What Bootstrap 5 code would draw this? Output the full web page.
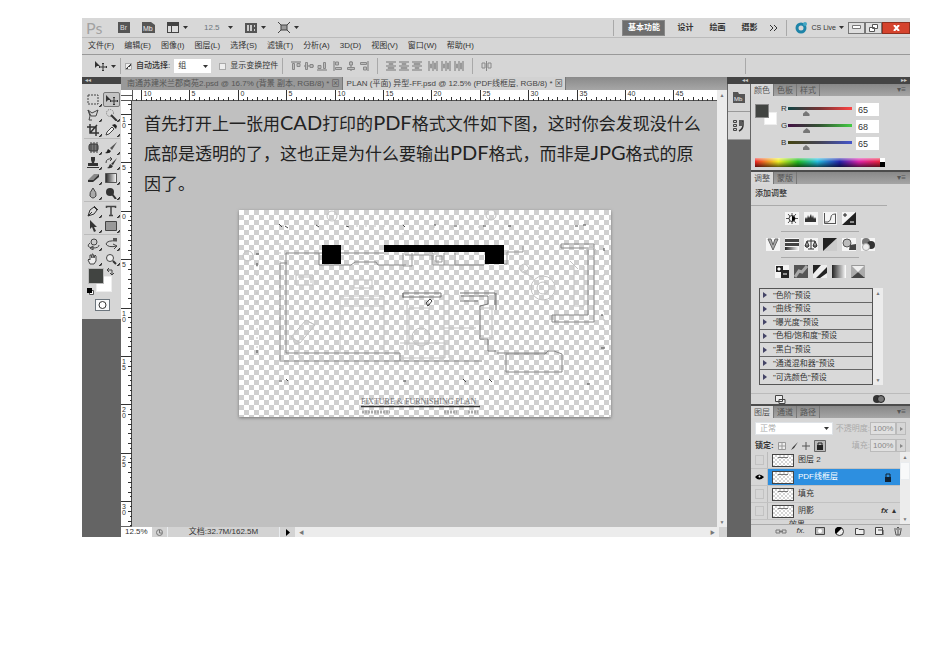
<!DOCTYPE html>
<html lang="zh-CN">
<head>
<meta charset="utf-8">
<meta name="viewport" content="width=device-width, initial-scale=1">
<title>PLAN - Ps</title>
<link href="https://cdn.jsdelivr.net/npm/bootstrap@5.3.0/dist/css/bootstrap.min.css" rel="stylesheet">
<style>
body{background:#fff;font-family:"Liberation Sans","Noto Sans CJK SC",sans-serif;font-size:8px;line-height:12px;color:#333;padding:18px 40px 24px 82px}
svg{display:block;flex:none}
button,select,input{font:inherit;color:inherit;border:0;padding:0;background:none;border-radius:0}
label,h2{font-size:inherit;margin:0;line-height:inherit}
a{color:inherit;text-decoration:none}
.app{background:#646464;min-width:780px}
.face{background:#d6d6d6}
.topbar{height:20px;border-bottom:1px solid #bbb;background:#d8d8d8}
.menus{height:17px;gap:10px;padding-left:6px;border-bottom:1px solid #999}
.opts{height:22px;background:#d6d6d6}
.vsep{width:1px;height:16px;background:#a9a9a9;flex:none}
.opt-end{margin-right:164px}
.logo-ps{font:16px/18px Lato,sans-serif;color:#a2a2a2;width:32px}
.g3{gap:3px}.g4{gap:4px}.g8{gap:8px}.g10{gap:10px}.g12{gap:12px}.g16{gap:16px}
.live{font-size:7px}
.workspace-on{background:#6e6e6e;color:#fff;border:1px solid #888;height:16px;width:43px;font-weight:700}
.winbtn{width:17px;height:12px;border:1px solid #777;background:#dedede;display:flex;align-items:center;justify-content:center}
.winbtn.closer{width:28px;background:#d5432d;color:#fff;border-color:#8f3020}
.check{appearance:none;width:7px;height:7px;border:1px solid #aaa;background:#eee;margin:0;flex:none}
.check:checked{background:linear-gradient(135deg,transparent 45%,#444 45%,#444 60%,transparent 60%),#eee}
.drop{appearance:none;background:#fff url("data:image/svg+xml,%3Csvg xmlns='http://www.w3.org/2000/svg' width='5' height='3'%3E%3Cpath d='M0 0h5L2.5 3z' fill='%23333'/%3E%3C/svg%3E") no-repeat right 3px center;padding:0 10px 0 4px}
.pick{width:37px;height:14px}
.blend{width:78px;height:13px}
.strip{height:7px;background:#454545;color:#ccc;font-size:6px;line-height:7px;padding:0 3px}
.toolcol{width:39px;flex:none}
.tools{padding:8px 1px 8px 2px}
.toolgrid{display:grid;grid-template-columns:1fr 1fr;border-bottom:1px solid #bbb;padding-bottom:1px;margin-bottom:1px;justify-items:center}
.toolgrid button{width:17px;height:15px;display:flex;align-items:center;justify-content:center;border-radius:2px;background:linear-gradient(135deg,transparent 90%,#333 90%)}
.toolgrid .on{border:1px solid #777;background:#c4c4c4}
.swatches,.chips{position:relative}
.swatches{height:27px}
.fgc,.bgc{position:absolute;width:16px;height:16px;border:1px solid #bbb}
.fgc{left:4px;top:0;background:#414441;z-index:1}
.bgc{left:12px;top:8px;background:#fff;border-color:#eee}
.sw-swap{position:absolute;right:6px;top:0}.sw-def{position:absolute;left:3px;bottom:0}
.doctabs{height:13px;background:linear-gradient(#8a8a8a,#a6a6a6)}
.doctab{height:13px;padding:0 2px 0 6px;color:#555;background:#999;border-right:1px solid #777;white-space:nowrap}
.doctab.on{background:#d2d2d2;color:#444;padding-left:4px}
.ruler{background:#fff}
.canvas{background:#c0c0c0;color:#222}
.note{font:17px/30px "Noto Sans CJK SC",sans-serif;padding:7px 8px 0 12px;margin:0 0 12px;white-space:nowrap}
.note span{font-family:Lato,"Noto Sans CJK SC",sans-serif;font-size:20px;line-height:20px}
.sheet{width:372px;max-width:95%;box-shadow:0 1px 3px #777;background:repeating-conic-gradient(#d0d0d0 0 25%,#fff 0 50%) 0 0/10px 10px}
.sheet svg{width:100%;height:auto}
.vscroll{width:10px;flex:none;background:#ececec;color:#777;font-size:5px;line-height:10px;text-align:center}
.knob{height:18px}
.status{height:10px;line-height:10px;background:#d3d3d3}
.zoomval{width:31px;padding-left:4px}
.docsize{width:113px}
.dock{width:24px;flex:none}
.dockset{margin:0 1px}
.dockbtn{height:28px;border-bottom:1px solid #999;display:flex;align-items:center;justify-content:center}
.panels{width:159px;flex:none}
.ptabs{height:12px;background:linear-gradient(#888,#a5a5a5);color:#555}
.ptabs button{height:12px;width:23px;border-right:1px solid #777;line-height:11px}
.ptabs .on{background:#d8d8d8;color:#555}
.pgap{height:2px;background:#4c4c4c}
.colorbody{height:74px;padding:7px 4px 0}
.chips{width:26px;height:22px}
.chips .fgc{width:14px;height:14px;left:0;top:1px;border-color:#888}.chips .bgc{left:9px;top:9px;width:13px;height:13px}
.chan{height:17px}
.chan label{width:7px}
.chan input[type=range]{appearance:none;width:64px;height:13px;margin:0 4px 0 0;background:linear-gradient(90deg,var(--a),var(--m),var(--z)) 0 4px/100% 3px no-repeat}
.chan input[type=range]::-webkit-slider-thumb{appearance:none;width:7px;height:5px;margin-top:8px;background:#777;clip-path:polygon(50% 0,100% 60%,100% 100%,0 100%,0 60%)}
.c-r{--a:#144;--m:#733;--z:#f44}.c-g{--a:#414;--m:#353;--z:#4c4}.c-b{--a:#441;--m:#445;--z:#45c}
.num{width:23px;height:13px;background:#fff;padding-left:2px;font-size:9px}
.spectrum{width:130px;height:9px;background:linear-gradient(#fff8,#fff0 40%,#0009),linear-gradient(90deg,#e22,#ee2 18%,#2b2 33%,#2bd 48%,#22a 65%,#d2a 80%,#e22)}
.adjbody{height:220px}
.adjtitle{height:21px}
.adjline{border-top:1px solid #aaa;width:136px}
.adjarea{width:138px}
.adjrow{height:26px;width:78px;margin:0 auto;border-bottom:1px solid #aaa;gap:5px}
.adjrow.last{border:0}
.presets{border:1px solid #555;height:97px;width:114px;display:grid;grid-auto-rows:1fr}
.presets button{border-bottom:1px solid #666;text-align:left;padding-left:3px;line-height:11px;display:flex;align-items:center;gap:6px;color:#333;min-height:0;background:#d9d9d9}
.presets button:last-child{border:0}
.presets i{width:0;height:0;border:3px solid transparent;border-left:4px solid #446;border-right:0}
.adjfoot{border-top:1px solid #bbb}
.prow{height:17px}
.box{border:1px solid #bbb;height:13px;width:26px;color:#888;background:#e0e0e0;padding-left:2px}
.boxbtn{border:1px solid #bbb;height:13px;width:10px;display:flex;align-items:center;justify-content:center}
.layer{height:17px;border-bottom:1px solid #c2c2c2;line-height:16px}
.layer .eye{width:17px;height:16px;border-right:1px solid #bbb;display:flex;align-items:center;justify-content:center}
.layer .eye i{width:9px;height:10px;border:1px solid #c2c2c2}
.thumb{width:22px;height:13px;border:1px solid #444;background:linear-gradient(#777,#777) 5px 2px/10px 1px no-repeat,repeating-conic-gradient(#d5d5d5 0 25%,#fff 0 50%) 0 0/4px 4px}
.layer.on .nm{background:#2d8fe0;color:#fff}
.nm{height:16px}
.layer-cut{height:4px;overflow:hidden;line-height:10px;padding-left:38px}
.layerfoot{height:13px;border-top:1px solid #aaa}
.faded{color:#aaa}
</style>
</head>
<body>
<svg width="0" height="0" class="position-absolute" aria-hidden="true">
<defs>
<symbol id="mv" viewBox="0 0 13 10"><path d="M1 0v7l2-2h3z" fill="#333"/><path d="M9 2v8M5 6h8M8 3l1-1 1 1M8 9l1 1 1-1M6 5 5 6l1 1M12 5l1 1-1 1" fill="none" stroke="#333"/></symbol>
<symbol id="ca" viewBox="0 0 5 3"><path d="M0 0h5L2.500 3z" fill="#333"/></symbol>
<symbol id="alt" viewBox="0 0 10 10"><path d="M0 1h10" stroke="#777"/><path d="M1.500 2.500h2v6h-2zM6 2.500h3v3H6z" fill="#bbb" stroke="#888"/></symbol>
<symbol id="alm" viewBox="0 0 10 10"><path d="M0 5h10" stroke="#777"/><path d="M1.500 1.500h2v7h-2zM6 3.500h3v3H6z" fill="#bbb" stroke="#888"/></symbol>
<symbol id="dis" viewBox="0 0 10 10"><path d="M0 1h10M0 5h10M0 9h10" stroke="#777"/><path d="M3 2.500h4v1H3zM2 6.500h6v1H2z" fill="#bbb" stroke="#999"/></symbol>
</defs></svg>

<main class="app">
<header>
 <div class="topbar d-flex align-items-center">
  <div class="d-flex align-items-center flex-grow-1 ps-1">
   <span class="logo-ps">Ps</span>
   <div class="d-flex align-items-center g12">
   <svg width="12" height="11"><rect width="12" height="11" fill="#555"/><text x="2" y="8" font-size="7" fill="#ddd">Br</text></svg>
   <svg width="13" height="11"><path d="M0 0h9l4 3v8H0z" fill="#555"/><text x="1" y="9" font-size="7" fill="#eee">Mb</text></svg>
   <span class="d-flex align-items-center g4"><svg width="12" height="11"><path d="M0 0h12v11H0z" fill="#444"/><path d="M1 4h3v6H1zM5 4h6v6H5z" fill="#ddd"/></svg><svg width="5" height="3"><use href="#ca"/></svg></span>
   <span class="d-flex align-items-center g8 ms-1 text-secondary">12.5 <svg width="5" height="3"><use href="#ca"/></svg></span>
   <span class="d-flex align-items-center g4"><svg width="12" height="10"><path d="M0 0h12v10H0z" fill="#555"/><path d="M2 2h2v6H2zM5 2h2v6H5zM9 2h1v2H9zM9 6h1v2H9z" fill="#ccc"/></svg><svg width="5" height="3"><use href="#ca"/></svg></span>
   <span class="d-flex align-items-center g4"><svg width="12" height="11"><path d="M3 3h6v5H3zM0 0l3 3M12 0 9 3M0 11l3-3M12 11 9 8" fill="#999" stroke="#444"/></svg><svg width="5" height="3"><use href="#ca"/></svg></span>
   </div>
  </div>
  <nav class="d-flex align-items-center g12">
   <div class="d-flex g8"><span class="vsep"></span><button class="workspace-on">基本功能</button></div>
   <div class="d-flex align-items-center g16"><button class="fw-bold">设计</button><button class="fw-bold">绘画</button><button class="fw-bold">摄影</button></div>
   <button aria-label="更多"><svg width="9" height="8"><path d="m1 1 3 3-3 3M5 1l3 3-3 3" fill="none" stroke="#333"/></svg></button>
  </nav>
  <div class="d-flex align-items-center g4 ps-1"><span class="vsep mx-1"></span>
   <svg width="12" height="12"><circle cx="6" cy="6" r="4" fill="none" stroke="#1e84a8" stroke-width="3"/><circle cx="10" cy="2" r="2" fill="#45a7c4"/></svg>
   <button class="live d-flex align-items-center g3">CS Live <svg width="5" height="3"><use href="#ca"/></svg></button>
   <div class="d-flex">
    <button class="winbtn" aria-label="最小化"><svg width="9" height="5"><path d="M.5.5h8v3h-8z" fill="#fff" stroke="#777"/></svg></button>
    <button class="winbtn" aria-label="还原"><svg width="9" height="8"><path d="M3.500.5h5v4h-5zM.5 3.500h5v4h-5z" fill="#fff" stroke="#555"/></svg></button>
    <button class="winbtn closer" aria-label="关闭"><svg width="7" height="6"><path d="m1 0 5 6M6 0 1 6" stroke="#fff" stroke-width="2"/></svg></button>
   </div></div>
 </div>
 <nav class="menus face d-flex align-items-center text-nowrap"><a href="#">文件(F)</a><a href="#">编辑(E)</a><a href="#">图像(I)</a><a href="#">图层(L)</a><a href="#">选择(S)</a><a href="#">滤镜(T)</a><a href="#">分析(A)</a><a href="#">3D(D)</a><a href="#">视图(V)</a><a href="#">窗口(W)</a><a href="#">帮助(H)</a></nav>
 <div class="opts d-flex align-items-center text-nowrap">
  <div class="d-flex align-items-center g4 px-1 ms-2"><svg width="13" height="10"><use href="#mv"/></svg><svg width="5" height="3"><use href="#ca"/></svg></div>
  <span class="vsep"></span>
  <div class="d-flex align-items-center px-1"><input class="check me-1" type="checkbox" id="auto" checked><label for="auto" class="fw-medium">自动选择:</label></div>
  <select class="drop pick" aria-label="自动选择"><option>组</option></select>
  <div class="d-flex align-items-center px-1"><input class="check mx-1" type="checkbox" id="tf"><label for="tf">显示变换控件</label></div>
  <span class="vsep"></span>
  <div class="d-flex g3 px-2" id="alignA"></div><span class="vsep"></span>
  <div class="d-flex g3 px-2" id="alignB"></div><span class="vsep"></span>
  <svg class="ms-2" width="11" height="10"><path d="M1 2v5h3V2zM7 2v5h3V2zM5.500 0v10" fill="none" stroke="#888"/></svg>
  <span class="vsep ms-auto opt-end"></span>
 </div>
</header>

<div class="d-flex">
 <aside class="toolcol">
  <div class="strip">◂◂</div>
  <div class="tools face">
   <div class="toolgrid">
    <button aria-label="选框"><svg width="12" height="11"><path d="M1 1h10v9H1z" fill="none" stroke="#444" stroke-dasharray="2 1"/></svg></button>
    <button class="on" aria-label="移动"><svg width="13" height="10"><use href="#mv"/></svg></button>
    <button aria-label="套索"><svg width="12" height="12"><path d="M1 1l4 3 6-3-2 6H4L1 1l2 6-1 4h3" fill="none" stroke="#444"/></svg></button>
    <button aria-label="快速选择"><svg width="13" height="12"><circle cx="5" cy="4" r="3.500" fill="none" stroke="#777" stroke-dasharray="1 1"/><path d="m6 6 6 6" stroke="#333" stroke-width="2"/></svg></button>
    <button aria-label="裁剪"><svg width="12" height="12"><path d="M3 0v9h9M0 3h9v9M3 9l7-8" fill="none" stroke="#333" stroke-width="1.500"/></svg></button>
    <button aria-label="吸管"><svg width="12" height="12"><path d="m1 11 1-3 5-5 2 2-5 5z" fill="#eee" stroke="#444"/><path d="m7 1 4 4 1-3-2-2z" fill="#222"/></svg></button>
   </div>
   <div class="toolgrid">
    <button aria-label="修复"><svg width="13" height="11"><rect x="2" y="2" width="9" height="7" rx="2" fill="#777" stroke="#333"/><path d="M4 0v11M7 0v11M10 0v11" stroke="#444"/></svg></button>
    <button aria-label="画笔"><svg width="12" height="12"><path d="M12 0 5 6l2 2z" fill="#555"/><path d="M0 11q2-1 3-4l3 2q-1 3-6 2" fill="#222"/></svg></button>
    <button aria-label="图章"><svg width="12" height="12"><path d="M4 0h4v3L7 6h4v3H1V6h4L4 3zM0 10h12v1H0z" fill="#333"/></svg></button>
    <button aria-label="历史画笔"><svg width="13" height="12"><path d="M12 1 6 7l2 1zM2 11q2-1 3-4l3 2q-1 3-6 2" fill="#333"/><path d="M1 6q0-5 6-4M5 0l2 2-2 2" fill="none" stroke="#444"/></svg></button>
    <button aria-label="橡皮擦"><svg width="12" height="11"><path d="m1 8 6-6h5l-6 6z" fill="#888"/><path d="M1 8h5v2H1zM6 8l6-6v3l-6 5z" fill="#333"/></svg></button>
    <button aria-label="渐变"><svg width="12" height="10"><defs><linearGradient id="gr"><stop stop-color="#222"/><stop offset="1" stop-color="#fff"/></linearGradient></defs><path d="M.5.5h11v9H.5z" fill="url(#gr)" stroke="#555"/></svg></button>
    <button aria-label="模糊"><svg width="10" height="12"><path d="M5 1q4 5 3 8-3 4-6 0-1-3 3-8" fill="#aaa" stroke="#444"/></svg></button>
    <button aria-label="减淡"><svg width="12" height="12"><circle cx="5" cy="5" r="4" fill="#333"/><path d="m7 7 4 5" stroke="#333" stroke-width="2"/></svg></button>
   </div>
   <div class="toolgrid">
    <button aria-label="钢笔"><svg width="12" height="12"><path d="m1 11 2-6 4-3 3 3-3 4zM1 11l4-4M7 1l4 4" fill="#ddd" stroke="#333"/></svg></button>
    <button aria-label="文字"><svg width="12" height="12"><path d="M1.500 3V1.500h9V3M6 1.500v9M4 10.500h4" fill="none" stroke="#444" stroke-width="1.500"/></svg></button>
    <button aria-label="路径选择"><svg width="9" height="12"><path d="M1 0v9l2-2 2 5 2-1-2-4h3z" fill="#333"/></svg></button>
    <button aria-label="矩形"><svg width="12" height="10"><path d="M.5.5h11v9H.5z" fill="#999" stroke="#444"/></svg></button>
   </div>
   <div class="toolgrid border-0">
    <button aria-label="3D 旋转"><svg width="13" height="12"><circle cx="7" cy="4" r="3" fill="#ccc" stroke="#444"/><path d="M3 5q-5 4 3 5 6 0 6-3M6 8v4l-3-2z" fill="none" stroke="#444"/></svg></button>
    <button aria-label="3D 环绕"><svg width="13" height="12"><path d="M12 3Q2 2 1 6q2 4 11 2M8 6l4 2-3 3" fill="none" stroke="#444"/><path d="M8 0h4v3H8z" fill="#555"/></svg></button>
    <button aria-label="抓手"><svg width="12" height="12"><path d="M3 11 1 7l1-1 1 1V2h1l1 3V1h1l1 4 1-3 1 1v5l-2 3z" fill="#eee" stroke="#444"/></svg></button>
    <button aria-label="缩放"><svg width="12" height="12"><circle cx="5" cy="5" r="3.500" fill="#eee" stroke="#444"/><path d="m8 8 3 3" stroke="#333" stroke-width="2"/></svg></button>
   </div>
   <div class="swatches"><div class="fgc"></div><div class="bgc"></div>
    <svg class="sw-swap" width="7" height="7"><path d="M1 2h4v4M2 0 0 2l2 2M3 5l2 2 2-2" fill="none" stroke="#444"/></svg>
    <svg class="sw-def" width="7" height="7"><path d="M2.500 2.500h4v4h-4z" fill="#fff" stroke="#555"/><path d="M0 0h5v5H0z" fill="#000"/></svg></div>
   <div class="pt-1"><button class="d-flex align-items-center justify-content-center mx-auto border border-secondary bg-light" aria-label="快速蒙版"><svg width="13" height="10"><circle cx="6.500" cy="5" r="3.500" fill="#fff" stroke="#333"/></svg></button></div>
  </div>
 </aside>

 <section class="flex-grow-1 d-flex flex-column overflow-hidden">
  <div class="doctabs d-flex"><button class="doctab">南通苏建米兰郡商苑2.psd @ 16.7% (背景 副本, RGB/8) * ⊠</button><button class="doctab on">PLAN (平面) 异型-FF.psd @ 12.5% (PDF线框层, RGB/8) * ⊠</button></div>
  <div class="d-flex flex-grow-1">
   <div class="flex-grow-1 d-flex flex-column overflow-hidden">
    <svg id="rh" class="ruler w-100" height="11"></svg>
    <div class="d-flex flex-grow-1">
     <svg id="rv" class="ruler" width="11" height="425"></svg>
     <div class="canvas flex-grow-1">
      <p class="note">首先打开上一张用<span>CAD</span>打印的<span>PDF</span>格式文件如下图，这时你会发现没什么<br>底部是透明的了，这也正是为什么要输出<span>PDF</span>格式，而非是<span>JPG</span>格式的原<br>因了。</p>
      <div class="sheet mx-auto">
       <svg viewBox="0 0 372 207" fill="none" stroke="#888">
        <g fill="#000" stroke="none"><path d="M83 35h19v19H83zM145 35h120v19h-19V42H145z"/></g>
        <path d="M47 53V43h36M80 43v12h32l4-3h21l2 3h28M102 43h43M41 53v98M47 53v90M41 53h7M41 151h202M47 143h114v8" stroke="#888"/>
        <path d="M164 43v13h9V43M166 45h27v10M190 43h4v12h11V43M197 46h6v6h-6zM205 55h40M216 43v12h29M265 54h3V42h16v-6" stroke="#999"/>
        <path d="M164 83h38v4h-38zM164 83v5M221 83h35v12M222 86h27v8l-8 2v33h8v12h8M239 91h-18M257 83v17" stroke="#777"/>
        <path d="M322 34v4h27v67h-36v7h42V34h-33M316 105v7M267 144v18h56v-18l-8-3h-6l-3 3zM258 143h50" stroke="#888"/>
        <g stroke="#c4c4c4"><path d="M57 65h17v10H57zM59 67h13v6M101 86h44v10h-44zM101 96v47M145 96v47M105 89h36M115 78h18v-8h-18zM170 98h20v36h-20zM205 84v64M210 84v64M168 90v50M205 118h32M241 98h12v30h-12M335 56v40M345 56v40h-10M331 51l8 8M280 58q5-8 10 0-5 10-10 0M282 60l12 8M161 133h45v15h-45M60 130v18"/><circle cx="182" cy="127" r="9"/><circle cx="304" cy="78" r="12"/><circle cx="304" cy="78" r="6"/><circle cx="93" cy="6" r="5"/><circle cx="252" cy="5" r="5"/><circle cx="9" cy="46" r="5"/><circle cx="352" cy="42" r="5"/><path d="m52 127 15-17 9 5-15 18zM55 128q-2 7 5 5M70 112l6 3"/><path d="M41 15v155M78 22v-8M108 16h54M164 14v18M194 17h54M264 17v13M300 17v12M18 55v90M365 55v90" stroke-dasharray="2 7"/></g>
        <path d="m40 14 3 3M46 16l3 2M77 15l3 2M107 16l3 1M164 15l2 2M195 15h2M215 16h3M244 16h3M269 16h3M336 16h3M344 15h3M17 44h3M18 53v3M18 140v3M40 171h3M47 169l2 2M164 171h3M224 169l3 3M250 169l3 3M187 93l4-4 2 2-4 5zM188 96l3-2M365 38v3M362 105h2M362 138h4M348 174h3" stroke="#444"/>
        <text x="122" y="194" font-size="8" font-family="Liberation Serif" fill="#777" stroke="none">FIXTURE &amp; FURNISHING PLAN</text>
        <path d="M122 196.500h119" stroke="#333" stroke-width="1.500"/><path d="M123 202h28M205 202h13M229 202h10" stroke="#aaa" stroke-width="3" stroke-dasharray="2 1"/>
       </svg>
      </div>
     </div>
    </div>
   </div>
   <div class="vscroll d-flex flex-column justify-content-between"><span>▲</span><span>▼</span></div>
  </div>
  <div class="status d-flex align-items-center text-nowrap">
   <span class="bg-white zoomval">12.5%</span>
   <svg class="mx-1" width="7" height="7"><circle cx="3.500" cy="3.500" r="3" fill="none" stroke="#777"/><path d="M3.500 1v3H6" fill="none" stroke="#777"/></svg>
   <span class="border-start border-end border-secondary-subtle text-center docsize">文档:32.7M/162.5M</span>
   <svg class="mx-1" width="7" height="7"><path d="M2 0v7l4-3.500z" fill="#000"/></svg>
   <div class="flex-grow-1 d-flex justify-content-between px-1 vscroll w-auto align-items-center"><span>◀</span><span>▶</span></div><span class="px-1"></span>
  </div>
 </section>

 <aside class="dock"><div class="strip text-end">◂◂</div>
  <div class="face dockset"><button class="dockbtn w-100" aria-label="Mini Bridge"><svg width="12" height="11"><path d="M0 0h5l1 2h6v9H0z" fill="#555"/><text x="1" y="9" font-size="6" fill="#eee">Mb</text></svg></button>
  <button class="dockbtn w-100" aria-label="历史记录"><svg width="12" height="12"><path d="M.5.5h3v2h-3zM.5 4.500h3v2h-3zM.5 8.500h3v2h-3z" fill="#ccc" stroke="#444"/><path d="M6 1h4v4q0 4-4 6M6 3h3M6 5h3" fill="none" stroke="#333" stroke-width="1.500"/></svg></button></div>
 </aside>

 <aside class="panels">
  <div class="strip text-end">▸▸</div>
  <div class="ptabs d-flex"><button class="on">颜色</button><button>色板</button><button>样式</button><span class="ms-auto pe-1">▾≡</span></div>
  <div class="colorbody face">
   <div class="d-flex">
    <div class="chips"><div class="fgc"></div><div class="bgc"></div></div>
    <div>
     <div class="chan d-flex"><label for="r">R</label><input id="r" class="c-r" type="range" max="255" value="65"><input class="num" value="65" aria-label="R 值"></div>
     <div class="chan d-flex"><label for="g">G</label><input id="g" class="c-g" type="range" max="255" value="68"><input class="num" value="68" aria-label="G 值"></div>
     <div class="chan d-flex"><label for="b">B</label><input id="b" class="c-b" type="range" max="255" value="65"><input class="num" value="65" aria-label="B 值"></div>
    </div>
   </div>
   <div class="spectrum mt-1 d-flex justify-content-end"><svg width="5" height="9"><path d="M0 0h5v4H0z" fill="#fff"/><path d="M0 4h5v5H0z"/></svg></div>
  </div>
  <div class="pgap"></div>
  <div class="ptabs d-flex"><button class="on">调整</button><button>蒙版</button><span class="ms-auto pe-1">▾≡</span></div>
  <div class="adjbody face">
   <h2 class="adjtitle px-1 pt-1">添加调整</h2>
   <div class="adjline"></div>
   <div class="adjarea">
   <div class="adjrow d-flex align-items-center justify-content-center">
    <svg width="14" height="13"><path fill="#f5f5f5" d="M0 0h14v13H0z"/><path d="M7 1v11M1 6.500h12M3 2l8 9M11 2l-8 9" stroke="#555"/><circle cx="7" cy="6.500" r="3" fill="#eee" stroke="#333"/><path d="M7 4v5q3 0 3-2.500T7 4"/></svg>
    <svg width="14" height="13"><path fill="#f5f5f5" d="M0 0h14v13H0z"/><path d="M1 10V7l1-2 1 2 1-4 1 3 2-4 1 4 1-3 1 4 1-2 1 2v3z" fill="#333"/></svg>
    <svg width="14" height="13"><path fill="#f5f5f5" d="M0 0h14v13H0z"/><path d="M1.500 1v10.500H12M2 10h3q3-1 3-5 0-3 5-3M12.500 2v10" fill="none" stroke="#555"/></svg>
    <svg width="14" height="13"><path fill="#f5f5f5" d="M0 0h14v13H0z"/><path d="M14 0v13H0z" fill="#222"/><path d="M1 3h4M3 1v4" stroke="#222"/><path d="M8 10h4" stroke="#fff"/></svg>
   </div>
   <div class="adjrow d-flex align-items-center justify-content-center">
    <svg width="14" height="13"><path fill="#f5f5f5" d="M0 0h14v13H0z"/><path d="m2 1 5 11 5-11H9L7 7 5 1z" fill="#aaa" stroke="#666"/></svg>
    <svg width="14" height="13"><path fill="#f5f5f5" d="M0 0h14v13H0z"/><path d="M0 1h14v3H0zM0 5h14v3H0z" fill="#444"/><path d="M0 9h14v3H0z" fill="url(#gr)"/></svg>
    <svg width="14" height="13"><path fill="#f5f5f5" d="M0 0h14v13H0z"/><path d="M7 1v10M3 3h8M4 11h6M3 3 1 8h4zM11 3 9 8h4zM1 8q2 3 4 0M9 8q2 3 4 0" fill="#aaa" stroke="#333"/></svg>
    <svg width="14" height="13"><path fill="#ccc" d="M0 0h14v13H0z"/><path d="M0 0h14L0 13z" fill="#222"/></svg>
    <svg width="14" height="13"><path fill="#f5f5f5" d="M0 0h14v13H0z"/><circle cx="5" cy="5" r="4" fill="#bbb" stroke="#555"/><path d="m8 7 6-1v6H7z" fill="#444"/></svg>
    <svg width="14" height="13"><path fill="#f5f5f5" d="M0 0h14v13H0z"/><circle cx="5" cy="4" r="4" fill="#777"/><circle cx="10" cy="7" r="4" fill="#333"/><circle cx="5" cy="9" r="3.500" fill="#eee" stroke="#aaa"/></svg>
   </div>
   <div class="adjrow last d-flex align-items-center justify-content-center">
    <svg width="14" height="13"><path fill="#f5f5f5" d="M0 0h14v13H0z"/><path d="M1 1h7v6H1zM6 5h8v8H6z" fill="#222"/><path d="M3 3h2v2H3zM8 9h4" fill="#fff" stroke="#fff"/></svg>
    <svg width="14" height="13"><path d="M0 0h14v13H0z" fill="#555"/><path d="m1 12 4-6 3 1 5-6" stroke="#aaa" stroke-width="3" fill="none"/></svg>
    <svg width="14" height="13"><path d="M0 0h14v13H0z" fill="#eee"/><path d="M0 0h8L0 9zM14 2v6l-7 5H3z" fill="#222"/></svg>
    <svg width="14" height="13"><path d="M0 0h14v13H0z" fill="url(#gr)"/></svg>
    <svg width="14" height="13"><path d="M.5.5h13v12H.5z" fill="#eee" stroke="#999"/><path d="M0 0l7 7-7 6zM14 0 7 7l7 6z" fill="#aaa"/><path d="m0 13 7-6 7 6z" fill="#444"/></svg>
   </div>
   </div>
   <div class="d-flex ps-2 pt-1"><div class="presets">
    <button><i></i>"色阶"预设</button><button><i></i>"曲线"预设</button><button><i></i>"曝光度"预设</button><button><i></i>"色相/饱和度"预设</button><button><i></i>"黑白"预设</button><button><i></i>"通道混和器"预设</button><button><i></i>"可选颜色"预设</button></div>
    <div class="vscroll d-flex flex-column justify-content-between"><span>▲</span><span>▼</span></div></div>
   <div class="mt-2 d-flex justify-content-between align-items-center ps-4 pe-4 adjfoot">
    <svg width="11" height="10"><path d="M.5 1.500h7v6h-7zM4 5.500h6v4H4z" fill="#eee" stroke="#444"/></svg><svg width="13" height="10"><circle cx="4" cy="5" r="4" fill="#333"/><circle cx="8" cy="5" r="3.500" fill="#777" stroke="#222"/></svg></div>
  </div>
  <div class="pgap"></div>
  <div class="ptabs d-flex"><button class="on">图层</button><button>通道</button><button>路径</button><span class="ms-auto pe-1">▾≡</span></div>
  <div class="face">
   <div class="prow d-flex align-items-center pt-1 text-nowrap"><select class="drop blend ms-1 border faded" aria-label="混合模式"><option>正常</option></select><label for="op" class="faded ms-auto">不透明度:</label><input id="op" class="box" value="100%"><button class="boxbtn me-1" aria-label="不透明度滑块"><svg width="3" height="4"><path d="m0 0 3 2-3 2z" fill="#888"/></svg></button></div>
   <div class="prow d-flex align-items-center ps-1 pt-1"><span class="d-flex align-items-center g4"><span class="fw-bold">锁定:</span>
    <svg width="8" height="8"><path d="M.5.5h7v7h-7zM0 4h8M4 0v8" fill="#eee" stroke="#999"/></svg><svg width="8" height="8"><path d="M8 0 3 5 1 8l3-2z" fill="#333"/></svg><svg width="8" height="8"><path d="M4 0v8M0 4h8" stroke="#555"/></svg>
    <svg width="12" height="12"><path d="M.5.5h11v11H.5z" fill="#bbb" stroke="#666"/><path d="M3 5h6v5H3z" fill="#222"/><path d="M4 5V3h4v2" fill="none" stroke="#222"/></svg></span>
    <label for="fl" class="faded ms-auto">填充:</label><input id="fl" class="box"  value="100%"><button class="boxbtn me-1" aria-label="填充滑块"><svg width="3" height="4"><path d="m0 0 3 2-3 2z" fill="#888"/></svg></button></div>
   <div class="d-flex"><div class="flex-grow-1" id="layers">
    <div class="layer d-flex align-items-center"><span class="eye"><i></i></span><div class="nm flex-grow-1 d-flex align-items-center g4 ps-1"><span class="thumb"></span>图层 2</div></div>
    <div class="layer on d-flex align-items-center"><span class="eye"><svg width="9" height="6"><path d="M0 3q4-5 9 0-5 5-9 0"/><circle cx="4.500" cy="2.500" r="1" fill="#fff"/></svg></span><div class="nm flex-grow-1 d-flex align-items-center g4 ps-1"><span class="thumb"></span>PDF线框层<svg class="ms-auto me-2 px-0" width="8" height="9"><path d="M1 4h6v5H1z" fill="#123"/><path d="M2 4V1h4v3" fill="none" stroke="#123"/></svg></div></div>
    <div class="layer d-flex align-items-center"><span class="eye"><i></i></span><div class="nm flex-grow-1 d-flex align-items-center g4 ps-1"><span class="thumb"></span>填充</div></div>
    <div class="layer d-flex align-items-center"><span class="eye"><i></i></span><div class="nm flex-grow-1 d-flex align-items-center g4 ps-1"><span class="thumb"></span>阴影<em class="ms-auto fw-bold">fx</em><span class="pe-1">▴</span></div></div>
    <div class="layer-cut">效果</div>
   </div><div class="vscroll d-flex flex-column"><span>▲</span><span class="knob bg-secondary-subtle border border-secondary-subtle"></span><span class="mt-auto">▼</span></div></div>
   <div class="d-flex justify-content-end align-items-center g10 pe-2 layerfoot">
    <svg width="12" height="7"><path d="M1 2h4v3H1zM7 2h4v3H7zM4 3.500h4" fill="none" stroke="#777"/></svg><em>fx.</em>
    <svg width="10" height="8"><path d="M.5.5h9v7h-9z" fill="#bbb" stroke="#444"/><circle cx="5" cy="4" r="2" fill="#fff"/></svg>
    <svg width="10" height="9"><circle cx="4.500" cy="4.500" r="4" fill="#eee" stroke="#333"/><path d="M1 7A4 4 0 0 1 7 1z"/></svg>
    <svg width="10" height="8"><path d="M.5 7.500v-6H3l1 1h5v5z" fill="#eee" stroke="#444"/></svg>
    <svg width="9" height="8"><path d="M.5.5h7v7h-7zM3 3h5v5" fill="#eee" stroke="#444"/></svg>
    <svg width="8" height="9"><path d="M0 2h8M3 .5h2M1 3l1 5h4l1-5M4 3v5" fill="none" stroke="#555"/></svg>
   </div>
  </div>
 </aside>
</div>
</main>
<script>
const icon = (s, deg = 0) => `<svg width="10" height="10"><use href="#${s}" width="10" height="10" transform="rotate(${deg} 5 5)"/></svg>`;
document.getElementById('alignA').innerHTML = icon('alt') + icon('alm') + icon('alt', 180) + '<span></span>' + icon('alt', -90) + icon('alm', -90) + icon('alt', 90);
document.getElementById('alignB').innerHTML = icon('dis') + icon('dis') + icon('dis', 180) + '<span></span>' + icon('dis', -90).repeat(3);

// Rulers: one labelled mark every 5 cm, nine minor ticks between
const step = 48.4, labels = [10,5,0,5,10,15,20,25,30,35,40,45];
let h = '<path d="M0 10.5H2000M11.5 0V11M0 5.5h11" stroke="#555"/>', v = '<path d="M10.500 0V2000" stroke="#444"/>';
for (let i = -3; i < 119; i++) {
  const p = Math.round(20 + i * step / 10) + .5, big = i % 10 === 0;
  if (p > 12) h += `<path d="M${p} ${big ? 0 : i % 2 ? 9 : 7}V11" stroke="#333"/>`;
  if (big && labels[i/10] !== undefined) h += `<text x="${p+2}" y="6" font-size="7" fill="#333">${labels[i/10]}</text>`;
}
for (let i = -2; i < 90; i++) {
  const p = Math.round(13 + i * step / 10) + .5, big = i % 10 === 0;
  v += `<path d="M${big ? 0 : i % 2 ? 9 : 7} ${p}H11" stroke="#333"/>`;
  if (big) String([10,5,0,5,10,15,20,25,30][i/10] ?? '').split('').forEach((c, k) => v += `<text x="1" y="${p+7+k*6}" font-size="7" fill="#333">${c}</text>`);
}
document.getElementById('rh').innerHTML = h;
document.getElementById('rv').innerHTML = v;
</script>
<script src="https://cdn.jsdelivr.net/npm/bootstrap@5.3.0/dist/js/bootstrap.bundle.min.js"></script>
</body>
</html>
